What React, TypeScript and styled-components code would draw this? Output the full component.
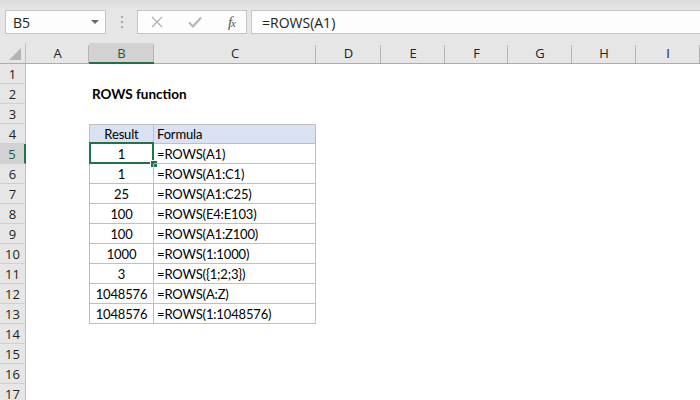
import styled, { createGlobalStyle } from "styled-components";

const GlobalStyle = createGlobalStyle`
  html, body {
    margin: 0;
    padding: 0;
    background: #ffffff;
    overflow: hidden;
  }
  body {
    font-family: "Lato", "Liberation Sans", sans-serif;
  }
`;

const Page = styled.div`
  width: 700px;
  height: 400px;
  overflow: hidden;
  background: #ffffff;
`;

const Toolbar = styled.div`
  box-sizing: border-box;
  height: 43px;
  display: flex;
  align-items: flex-start;
  padding: 10px 0 0 5px;
  background: linear-gradient(#dcdcdc, #e6e6e6 9px);
`;

const NameBox = styled.div`
  box-sizing: border-box;
  width: 101px;
  height: 24px;
  display: flex;
  align-items: center;
  justify-content: space-between;
  padding: 0 6px 0 7px;
  background: #fdfdfd;
  border: 1px solid #c6c6c6;
  font-family: "Open Sans", "Noto Sans", sans-serif;
  font-size: 14px;
  color: #222;
`;

const DropArrow = styled.span`
  width: 0;
  height: 0;
  border-left: 4px solid transparent;
  border-right: 4px solid transparent;
  border-top: 4px solid #6a6a6a;
`;

const Grip = styled.div`
  width: 2px;
  height: 24px;
  margin: 0 14px 0 15px;
  display: flex;
  flex-direction: column;
  justify-content: center;
  gap: 3px;

  span {
    width: 2px;
    height: 2px;
    background: #a8a8a8;
  }
`;

const FxBox = styled.div`
  box-sizing: border-box;
  width: 110px;
  height: 24px;
  display: flex;
  align-items: center;
  justify-content: space-between;
  padding: 0 11px 0 13px;
  background: #fdfdfd;
  border: 1px solid #c6c6c6;
`;

const FxIcon = styled.span`
  font-family: "Liberation Serif", "DejaVu Serif", serif;
  font-style: italic;
  font-size: 15px;
  color: #555;
  letter-spacing: -1px;

  small {
    font-size: 11px;
  }
`;

const FormulaInput = styled.div`
  box-sizing: border-box;
  flex: 1;
  height: 24px;
  margin-left: 4px;
  display: flex;
  align-items: center;
  padding-left: 10px;
  background: #fdfdfd;
  border: 1px solid #c6c6c6;
  border-right: none;
  font-family: "Open Sans", "Noto Sans", sans-serif;
  font-size: 14px;
  color: #222;
`;

const Sheet = styled.div`
  display: grid;
  grid-template-columns: 26px 63px 65px 162px 65px 64px 63px 64px 64px 64px;
  grid-template-rows: 21px;
  grid-auto-rows: 20px;
`;

const Corner = styled.div`
  position: relative;
  box-sizing: border-box;
  background: #e6e6e6;
  border-bottom: 1px solid #ababab;
  border-right: 1px solid #bdbdbd;

  &::after {
    content: "";
    position: absolute;
    right: 4px;
    bottom: 3px;
    border-left: 12px solid transparent;
    border-bottom: 12px solid #b4b4b4;
  }
`;

const ColHeader = styled.div<{ $selected?: boolean }>`
  position: relative;
  box-sizing: border-box;
  display: flex;
  align-items: center;
  justify-content: center;
  background: ${({ $selected }) => ($selected ? "#d2d2d2" : "#e6e6e6")};
  border-bottom: ${({ $selected }) => ($selected ? "2px solid #217346" : "1px solid #ababab")};
  font-family: "Open Sans", "Noto Sans", sans-serif;
  font-size: 13px;
  color: ${({ $selected }) => ($selected ? "#1d5e3a" : "#222")};

  &::after {
    content: "";
    position: absolute;
    right: 0;
    top: 2px;
    bottom: 0;
    width: 1px;
    background: #b4b4b4;
  }
`;

const RowHeader = styled.div<{ $selected?: boolean }>`
  box-sizing: border-box;
  display: flex;
  align-items: center;
  justify-content: center;
  background: ${({ $selected }) => ($selected ? "#d2d2d2" : "#e6e6e6")};
  border-bottom: 1px solid #cfcfcf;
  border-right: ${({ $selected }) => ($selected ? "2px solid #217346" : "1px solid #bdbdbd")};
  font-family: "Open Sans", "Noto Sans", sans-serif;
  font-size: 13px;
  color: ${({ $selected }) => ($selected ? "#1d5e3a" : "#222")};
`;

const Cell = styled.div<{
  $boxed?: boolean;
  $top?: boolean;
  $left?: boolean;
  $head?: boolean;
  $align?: "left" | "center";
  $bold?: boolean;
}>`
  position: relative;
  box-sizing: border-box;
  display: flex;
  align-items: center;
  justify-content: ${({ $align }) => ($align === "center" ? "center" : "flex-start")};
  padding: 0 3px;
  white-space: nowrap;
  overflow: visible;
  font-size: ${({ $bold }) => ($bold ? "13.5px" : "13px")};
  letter-spacing: ${({ $bold }) => ($bold ? "0" : "-0.15px")};
  font-weight: ${({ $bold }) => ($bold ? 700 : 400)};
  color: #000;
  background: ${({ $head }) => ($head ? "#d9e1f2" : "transparent")};
  border-right: ${({ $boxed }) => ($boxed ? "1px solid #bfbfbf" : "none")};
  border-bottom: ${({ $boxed }) => ($boxed ? "1px solid #bfbfbf" : "none")};
  border-top: ${({ $top }) => ($top ? "1px solid #bfbfbf" : "none")};
  border-left: ${({ $left }) => ($left ? "1px solid #bfbfbf" : "none")};
`;

const Selection = styled.div`
  position: absolute;
  left: -1px;
  top: -2px;
  right: -1px;
  bottom: -1px;
  border: 2px solid #217346;
  pointer-events: none;

  &::after {
    content: "";
    position: absolute;
    right: -5px;
    bottom: -5px;
    width: 6px;
    height: 6px;
    background: #217346;
    border: 1px solid #fff;
    border-width: 1px 0 0 1px;
  }
`;

const columns = ["A", "B", "C", "D", "E", "F", "G", "H", "I"];

const examples: [string, string][] = [
  ["1", "=ROWS(A1)"],
  ["1", "=ROWS(A1:C1)"],
  ["25", "=ROWS(A1:C25)"],
  ["100", "=ROWS(E4:E103)"],
  ["100", "=ROWS(A1:Z100)"],
  ["1000", "=ROWS(1:1000)"],
  ["3", "=ROWS({1;2;3})"],
  ["1048576", "=ROWS(A:Z)"],
  ["1048576", "=ROWS(1:1048576)"],
];

const CancelIcon = () => (
  <svg width="12" height="12" viewBox="0 0 12 12">
    <path d="M1 1 L11 11 M11 1 L1 11" stroke="#b3b3b3" strokeWidth="1.4" fill="none" />
  </svg>
);

const CheckIcon = () => (
  <svg width="14" height="12" viewBox="0 0 14 12">
    <path d="M1 6.5 L5 10.5 L13 1.5" stroke="#b3b3b3" strokeWidth="2" fill="none" />
  </svg>
);

const renderRow = (row: number) => {
  const tableIndex = row - 4; // 0 = table header
  const inTable = tableIndex >= 0 && tableIndex <= examples.length;
  const cells = columns.map((col) => {
    const key = `${col}${row}`;
    if (row === 2 && col === "B") {
      return (
        <Cell key={key} $bold>
          ROWS function
        </Cell>
      );
    }
    if (inTable && (col === "B" || col === "C")) {
      const isB = col === "B";
      const head = tableIndex === 0;
      const text = head
        ? isB
          ? "Result"
          : "Formula"
        : examples[tableIndex - 1][isB ? 0 : 1];
      return (
        <Cell key={key} $boxed $top={head} $left={isB} $head={head} $align={isB ? "center" : "left"}>
          {text}
          {row === 5 && isB && <Selection />}
        </Cell>
      );
    }
    return <Cell key={key} />;
  });
  return [
    <RowHeader key={`r${row}`} $selected={row === 5}>
      {row}
    </RowHeader>,
    ...cells,
  ];
};

const App = () => {
  const rows = Array.from({ length: 17 }, (_, i) => i + 1);
  return (
    <Page>
      <GlobalStyle />
      <Toolbar>
        <NameBox>
          B5
          <DropArrow />
        </NameBox>
        <Grip>
          <span />
          <span />
          <span />
        </Grip>
        <FxBox>
          <CancelIcon />
          <CheckIcon />
          <FxIcon>
            f<small>x</small>
          </FxIcon>
        </FxBox>
        <FormulaInput>=ROWS(A1)</FormulaInput>
      </Toolbar>
      <Sheet>
        <Corner />
        {columns.map((col) => (
          <ColHeader key={col} $selected={col === "B"}>
            {col}
          </ColHeader>
        ))}
        {rows.map(renderRow)}
      </Sheet>
    </Page>
  );
};

export default App;
